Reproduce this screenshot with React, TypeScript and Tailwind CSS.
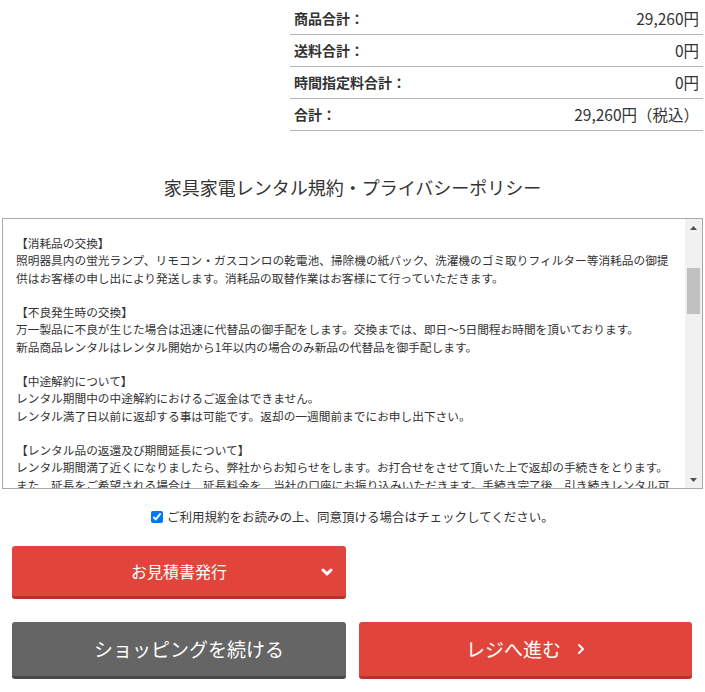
import { useEffect } from "react";

const totals = [
  { label: "商品合計：", value: "29,260円" },
  { label: "送料合計：", value: "0円" },
  { label: "時間指定料合計：", value: "0円" },
  { label: "合計：", value: "29,260円（税込）" },
];

const terms = `【消耗品の交換】
照明器具内の蛍光ランプ、リモコン・ガスコンロの乾電池、掃除機の紙パック、洗濯機のゴミ取りフィルター等消耗品の御提供はお客様の申し出により発送します。消耗品の取替作業はお客様にて行っていただきます。

【不良発生時の交換】
万一製品に不良が生じた場合は迅速に代替品の御手配をします。交換までは、即日～5日間程お時間を頂いております。
新品商品レンタルはレンタル開始から1年以内の場合のみ新品の代替品を御手配します。

【中途解約について】
レンタル期間中の中途解約におけるご返金はできません。
レンタル満了日以前に返却する事は可能です。返却の一週間前までにお申し出下さい。

【レンタル品の返還及び期間延長について】
レンタル期間満了近くになりましたら、弊社からお知らせをします。お打合せをさせて頂いた上で返却の手続きをとります。
また、延長をご希望される場合は、延長料金を、当社の口座にお振り込みいただきます。手続き完了後、引き続きレンタル可能です。

【その他】
ご不明な点はお問い合わせください。`;

export default function App() {
  useEffect(() => {
    document.title = "カート";
  }, []);

  return (
    <main
      className="min-h-screen w-[705px] bg-white text-[#333]"
      style={{ fontFamily: '"Noto Sans CJK JP", "Noto Sans", sans-serif' }}
    >
      {/* totals */}
      <div className="flex justify-end pt-[3px] pr-[2px]">
        <div className="w-[413px]">
          {totals.map((t) => (
            <div
              key={t.label}
              className="flex h-[32px] items-center justify-between border-b border-[#b4b4b4] pl-[4px] pr-[4px]"
            >
              <span className="text-[14px] font-bold">{t.label}</span>
              <span className="text-[15.5px]">{t.value}</span>
            </div>
          ))}
        </div>
      </div>

      <h2 className="mt-[44px] text-center text-[18px] leading-[24px]">
        家具家電レンタル規約・プライバシーポリシー
      </h2>

      {/* terms box */}
      <div className="ml-[2px] mt-[19px] flex h-[271px] w-[701px] border border-[#a9a9a9]">
        <div className="flex-1 overflow-hidden pl-[13px] pt-[15px]">
          <p className="w-[662px] whitespace-pre-wrap text-[11.7px] leading-[17.25px]">{terms}</p>
        </div>
        <div className="flex w-[17px] flex-col items-center bg-[#f1f1f1]">
          <div className="flex h-[17px] w-full items-center justify-center">
            <svg width="7" height="4" viewBox="0 0 7 4">
              <path d="M0 4 L3.5 0 L7 4 Z" fill="#505050" />
            </svg>
          </div>
          <div className="mt-[32px] h-[46px] w-[13px] bg-[#c1c1c1]" />
          <div className="flex-1" />
          <div className="flex h-[17px] w-full items-center justify-center">
            <svg width="7" height="4" viewBox="0 0 7 4">
              <path d="M0 0 L3.5 4 L7 0 Z" fill="#505050" />
            </svg>
          </div>
        </div>
      </div>

      {/* agreement */}
      <label className="mt-[20px] flex items-center justify-center gap-[4px] text-[12.5px] leading-[16px]">
        <input type="checkbox" defaultChecked className="m-0 h-[12px] w-[12px] accent-[#0075ff]" />
        <span>ご利用規約をお読みの上、同意頂ける場合はチェックしてください。</span>
      </label>

      {/* buttons */}
      <div className="mt-[21px] flex flex-col gap-[23px] pl-[12px] pr-[13px]">
        <div className="flex">
          <button className="relative flex h-[53px] w-[334px] items-center justify-center rounded-[3px] border-b-[3px] border-[#b8322b] bg-[#e1443b] text-[16px] text-white">
            お見積書発行
            <svg
              className="absolute right-[13px] top-[22px]"
              width="12"
              height="9"
              viewBox="0 0 12 9"
            >
              <path d="M2 2 L6 6 L10 2" fill="none" stroke="white" strokeWidth="3" strokeLinecap="round" strokeLinejoin="round" />
            </svg>
          </button>
        </div>
        <div className="flex gap-[13px]">
          <button className="flex h-[57px] w-[334px] items-center justify-center rounded-[3px] border-b-[3px] border-[#4a4a4a] bg-[#656565] pl-[20px] text-[19px] text-white">
            ショッピングを続ける
          </button>
          <button className="flex h-[57px] w-[333px] items-center justify-center gap-[16px] rounded-[3px] border-b-[3px] border-[#b8322b] bg-[#e1443b] text-[19px] text-white">
            <span>レジへ進む</span>
            <svg width="8" height="12" viewBox="0 0 8 12">
              <path d="M2 2 L6 6 L2 10" fill="none" stroke="white" strokeWidth="2" strokeLinecap="round" strokeLinejoin="round" />
            </svg>
          </button>
        </div>
      </div>
    </main>
  );
}
